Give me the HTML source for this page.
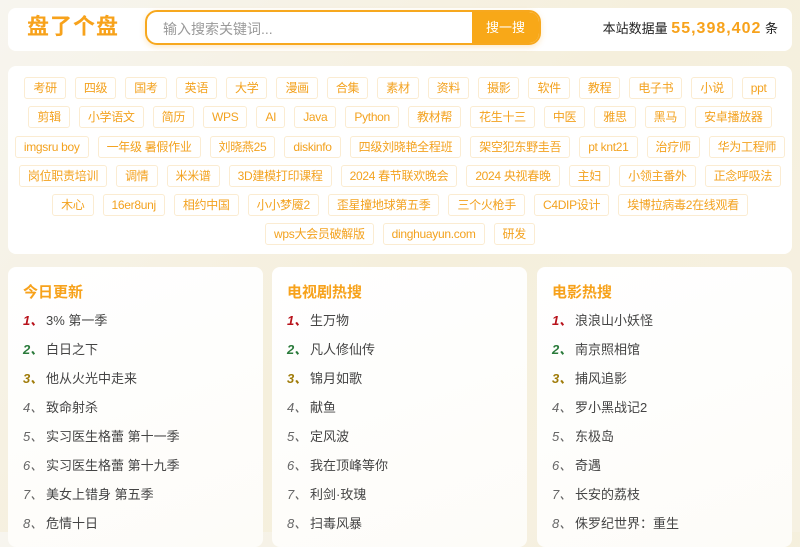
<!DOCTYPE html>
<html><head><meta charset="utf-8"><style>
*{margin:0;padding:0;box-sizing:border-box}
body{width:800px;height:532px;overflow:hidden;background:linear-gradient(135deg,#f7f5ef 0%,#f5efdc 50%,#f6f1e2 100%);font-family:"Liberation Sans","Noto Sans CJK SC",sans-serif;position:relative}
.card{position:absolute;background:#fff;border-radius:8px}
.hd{left:8px;top:8px;width:784px;height:43px}
.logo{position:absolute;left:19px;top:4px;font-size:22px;line-height:30px;font-weight:bold;color:#f7a21b;letter-spacing:1px}
.search{position:absolute;left:137px;top:2px;width:396px;height:35px;border:2px solid #f7a81e;border-radius:12px;overflow:hidden;box-shadow:0 2px 6px rgba(247,168,30,.25)}
.search span{position:absolute;left:16px;top:7px;font-size:14px;color:#999}
.search b{position:absolute;right:0;top:0;width:67px;height:100%;background:#f8a818;color:#fff;font-weight:normal;font-size:13px;text-align:center;line-height:32px}
.stat{position:absolute;right:14px;top:10px;font-size:13px;color:#222}
.stat b{color:#f7a21b;font-size:16px;letter-spacing:1px}
.tags{left:8px;top:66px;width:784px;height:188px;padding:11px 6px 0}
.row{display:flex;justify-content:center;gap:9px;height:29.3px}
.t{height:22px;padding:0 8px;border:1px solid #fbecd2;border-radius:3px;font-size:12px;letter-spacing:-0.3px;color:#f3a21f;line-height:20px;white-space:nowrap}
.col{top:267px;height:280px;width:255px;background:linear-gradient(160deg,#fff 0%,#fdfcf8 100%);padding:14px 0 0 15px}
.col h3{font-size:15px;color:#f7a21b;margin-bottom:7px}
.col li{list-style:none;font-size:13px;color:#444;height:29px;line-height:23px}
.col li i{display:inline-block;width:23px;font-style:italic;color:#666}
.r1 i{color:#b8121b!important;font-weight:bold}.r2 i{color:#2a7a3b!important;font-weight:bold}.r3 i{color:#a07c0a!important;font-weight:bold}
</style></head><body>
<div class="card hd"><div class="logo">盘了个盘</div>
<div class="search"><span>输入搜索关键词...</span><b>搜一搜</b></div>
<div class="stat">本站数据量 <b>55,398,402</b> 条</div></div>
<div class="card tags">
<div class="row"><span class="t">考研</span><span class="t">四级</span><span class="t">国考</span><span class="t">英语</span><span class="t">大学</span><span class="t">漫画</span><span class="t">合集</span><span class="t">素材</span><span class="t">资料</span><span class="t">摄影</span><span class="t">软件</span><span class="t">教程</span><span class="t">电子书</span><span class="t">小说</span><span class="t">ppt</span></div>
<div class="row"><span class="t">剪辑</span><span class="t">小学语文</span><span class="t">简历</span><span class="t">WPS</span><span class="t">AI</span><span class="t">Java</span><span class="t">Python</span><span class="t">教材帮</span><span class="t">花生十三</span><span class="t">中医</span><span class="t">雅思</span><span class="t">黑马</span><span class="t">安卓播放器</span></div>
<div class="row"><span class="t">imgsru boy</span><span class="t">一年级 暑假作业</span><span class="t">刘晓燕25</span><span class="t">diskinfo</span><span class="t">四级刘晓艳全程班</span><span class="t">架空犯东野圭吾</span><span class="t">pt knt21</span><span class="t">治疗师</span><span class="t">华为工程师</span></div>
<div class="row"><span class="t">岗位职责培训</span><span class="t">调情</span><span class="t">米米谱</span><span class="t">3D建模打印课程</span><span class="t">2024 春节联欢晚会</span><span class="t">2024 央视春晚</span><span class="t">主妇</span><span class="t">小领主番外</span><span class="t">正念呼吸法</span></div>
<div class="row"><span class="t">木心</span><span class="t">16er8unj</span><span class="t">相约中国</span><span class="t">小小梦魇2</span><span class="t">歪星撞地球第五季</span><span class="t">三个火枪手</span><span class="t">C4DIP设计</span><span class="t">埃博拉病毒2在线观看</span></div>
<div class="row"><span class="t">wps大会员破解版</span><span class="t">dinghuayun.com</span><span class="t">研发</span></div>
</div>
<div class="card col" style="left:8px"><h3>今日更新</h3><ul>
<li class="r1"><i>1、</i>3% 第一季</li><li class="r2"><i>2、</i>白日之下</li><li class="r3"><i>3、</i>他从火光中走来</li><li><i>4、</i>致命射杀</li><li><i>5、</i>实习医生格蕾 第十一季</li><li><i>6、</i>实习医生格蕾 第十九季</li><li><i>7、</i>美女上错身 第五季</li><li><i>8、</i>危情十日</li></ul></div>
<div class="card col" style="left:272px"><h3>电视剧热搜</h3><ul>
<li class="r1"><i>1、</i>生万物</li><li class="r2"><i>2、</i>凡人修仙传</li><li class="r3"><i>3、</i>锦月如歌</li><li><i>4、</i>献鱼</li><li><i>5、</i>定风波</li><li><i>6、</i>我在顶峰等你</li><li><i>7、</i>利剑·玫瑰</li><li><i>8、</i>扫毒风暴</li></ul></div>
<div class="card col" style="left:537px"><h3>电影热搜</h3><ul>
<li class="r1"><i>1、</i>浪浪山小妖怪</li><li class="r2"><i>2、</i>南京照相馆</li><li class="r3"><i>3、</i>捕风追影</li><li><i>4、</i>罗小黑战记2</li><li><i>5、</i>东极岛</li><li><i>6、</i>奇遇</li><li><i>7、</i>长安的荔枝</li><li><i>8、</i>侏罗纪世界：重生</li></ul></div>
</body></html>
